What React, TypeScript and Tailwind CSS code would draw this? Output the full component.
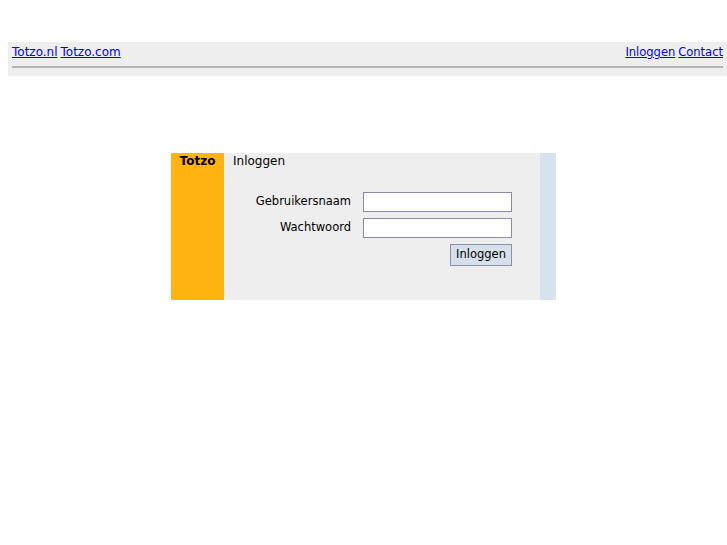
export default function App() {
  return (
    <div className="min-h-[545px] bg-white pt-[42px] font-['DejaVu_Sans',sans-serif] text-[12px] text-black">
      <div className="ml-2 bg-[#eeeeee] px-1 pt-[1px] pb-[8px]">
        <div className="flex justify-between leading-[18px]">
          <div className="flex gap-[3px]">
            <a href="#" className="text-[#0000ee] underline">Totzo.nl</a>
            <a href="#" className="text-[#0000ee] underline">Totzo.com</a>
          </div>
          <div className="flex gap-[3px] text-[11.5px]">
            <a href="#" className="text-[#0000ee] underline">Inloggen</a>
            <a href="#" className="text-[#0000ee] underline">Contact</a>
          </div>
        </div>
        <hr className="mt-[5px] border-t-2 border-[#b4b4b4]" />
      </div>

      <div className="mx-auto mt-[77px] flex h-[147px] w-[385px]">
        <div className="w-[53px] bg-[#ffb310] text-center font-bold leading-[16px]">Totzo</div>
        <div className="flex-1 bg-[#eeeeee] pl-[9px]">
          <div className="leading-[16px]">Inloggen</div>
          <div className="mt-[23px] flex flex-col gap-[6px] pr-[28px] text-[11.5px]">
            <div className="flex items-center justify-end gap-[12px]">
              <label>Gebruikersnaam</label>
              <input type="text" className="h-[20px] w-[149px] border border-[#8a8aa8] bg-white" />
            </div>
            <div className="flex items-center justify-end gap-[12px]">
              <label>Wachtwoord</label>
              <input type="password" className="h-[20px] w-[149px] border border-[#8a8aa8] bg-white" />
            </div>
            <div className="flex justify-end">
              <button className="h-[22px] w-[62px] border border-[#8a90aa] bg-[#d6e0ea]">Inloggen</button>
            </div>
          </div>
        </div>
        <div className="w-[16px] bg-[#d6e2ec]" />
      </div>
    </div>
  );
}
